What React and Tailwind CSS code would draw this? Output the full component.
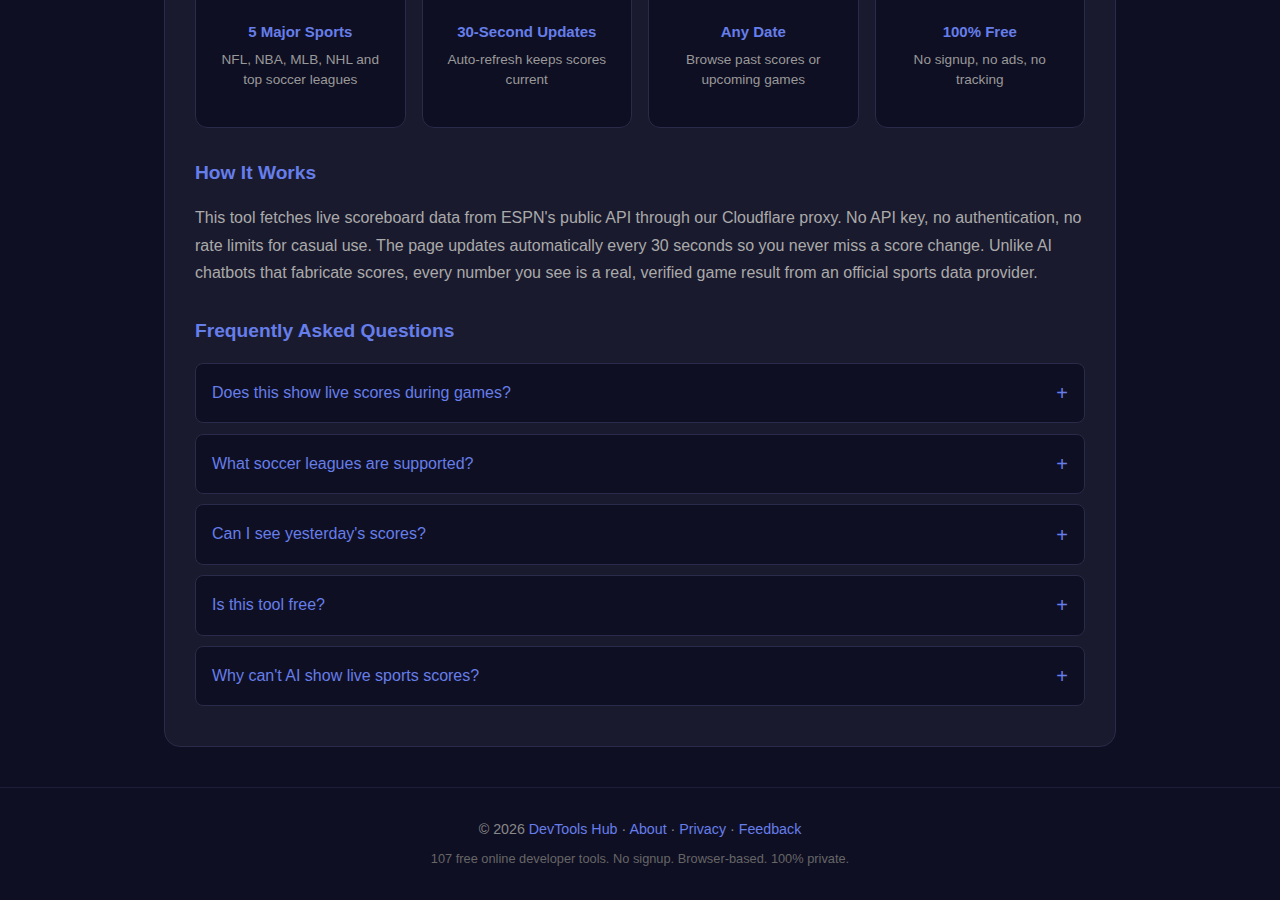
import React, { useState } from 'react';
import { Trophy, RefreshCw, CalendarDays, Gift } from 'lucide-react';

const FEATURES = [
  { icon: Trophy, title: '5 Major Sports', desc: 'NFL, NBA, MLB, NHL and top soccer leagues' },
  { icon: RefreshCw, title: '30-Second Updates', desc: 'Auto-refresh keeps scores current' },
  { icon: CalendarDays, title: 'Any Date', desc: 'Browse past scores or upcoming games' },
  { icon: Gift, title: '100% Free', desc: 'No signup, no ads, no tracking' },
];

const FAQS = [
  { q: 'Does this show live scores during games?', a: 'Yes. Scores refresh every 30 seconds while games are in progress.' },
  { q: 'What soccer leagues are supported?', a: 'Premier League, La Liga, Bundesliga, Serie A, Ligue 1 and MLS.' },
  { q: "Can I see yesterday's scores?", a: 'Yes. Use the date picker to browse any past or upcoming date.' },
  { q: 'Is this tool free?', a: 'Completely free. No signup, no ads, no tracking.' },
  { q: "Why can't AI show live sports scores?", a: 'Chatbots have no live data feed, so they guess. This tool reads real scoreboard data.' },
];

function FaqItem({ q, a }) {
  const [open, setOpen] = useState(false);
  return (
    <div className="rounded-lg border border-[#2a2a4a] bg-[#0f0f23]">
      <button
        onClick={() => setOpen(!open)}
        className="w-full flex items-center justify-between px-4 py-5 text-left text-[16px] leading-[18.5px] text-[#667eea]"
      >
        <span>{q}</span>
        <span className="text-[20px] leading-[18px] text-[#667eea]">{open ? '−' : '+'}</span>
      </button>
      {open && <p className="px-4 pb-4 text-[15px] leading-[1.6] text-[#aaa]">{a}</p>}
    </div>
  );
}

export default function App() {
  return (
    <div className="min-h-[900px] bg-[#0f0f23] font-['Liberation_Sans',Arial,sans-serif] overflow-hidden">
      <main className="-mt-[91px] mx-auto w-[952px] rounded-2xl border border-[#2a2a4a] bg-[#1a1a2e] px-[30px] pt-[30px] pb-10">
        {/* Feature cards */}
        <div className="grid grid-cols-4 gap-4">
          {FEATURES.map(f => {
            const Icon = f.icon;
            return (
              <div key={f.title} className="rounded-xl border border-[#2a2a4a] bg-[#0f0f23] px-5 pt-5 pb-[37px] text-center">
                <div className="h-8 mb-7 flex justify-center">
                  <Icon className="w-8 h-8 text-[#667eea]" strokeWidth={1.5} />
                </div>
                <h3 className="text-[15px] leading-[22px] font-bold text-[#667eea] mb-[7px]">{f.title}</h3>
                <p className="text-[13.6px] leading-[20px] text-[#999]">{f.desc}</p>
              </div>
            );
          })}
        </div>

        <h2 className="mt-[33px] mb-[19.4px] text-[19.2px] leading-[24px] font-bold text-[#667eea]">How It Works</h2>
        <p className="text-[16px] leading-[1.7] text-[#aaa]">
          This tool fetches live scoreboard data from ESPN's public API through our Cloudflare proxy. No API key, no authentication, no rate limits for casual use. The page updates automatically every 30 seconds so you never miss a score change. Unlike AI chatbots that fabricate scores, every number you see is a real, verified game result from an official sports data provider.
        </p>

        <h2 className="mt-[33px] mb-[20px] text-[19.2px] leading-[24px] font-bold text-[#667eea]">Frequently Asked Questions</h2>
        <div className="flex flex-col gap-[10.25px]">
          {FAQS.map(f => <FaqItem key={f.q} q={f.q} a={f.a} />)}
        </div>
      </main>

      <footer className="mt-10 border-t border-[#1e1e3a] pt-[30px] pb-8 text-center">
        <p className="text-[14.25px] leading-[22px] text-[#888]">
          © 2026 <a href="#" className="text-[#667eea]">DevTools Hub</a> · <a href="#" className="text-[#667eea]">About</a> · <a href="#" className="text-[#667eea]">Privacy</a> · <a href="#" className="text-[#667eea]">Feedback</a>
        </p>
        <p className="mt-[9px] text-[12.8px] leading-[20px] text-[#666]">107 free online developer tools. No signup. Browser-based. 100% private.</p>
      </footer>
    </div>
  );
}
